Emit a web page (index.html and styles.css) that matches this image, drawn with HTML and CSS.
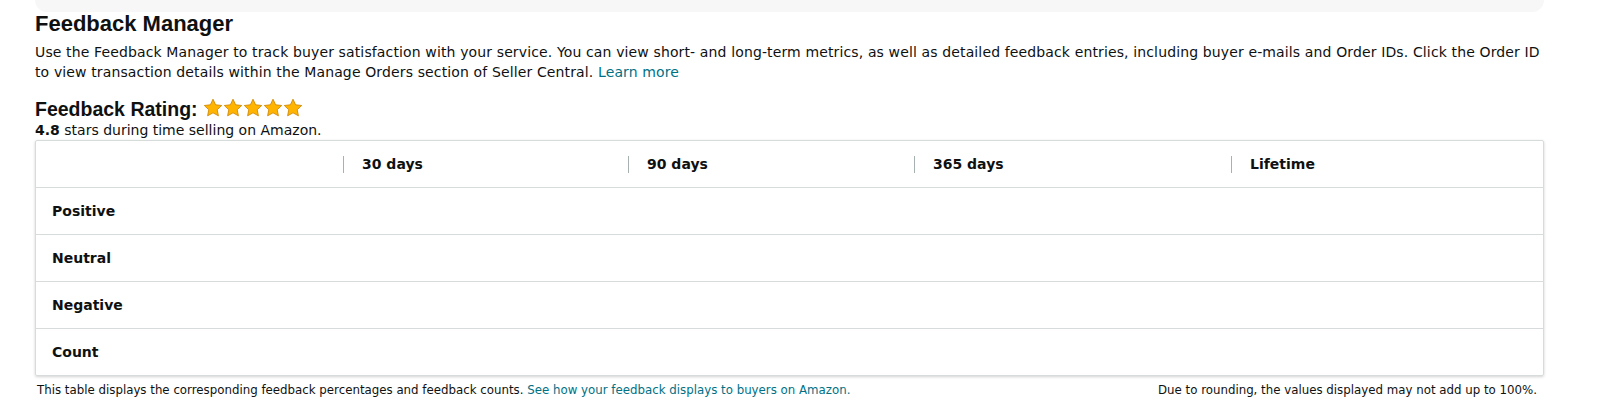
FILE: index.html
```html
<!DOCTYPE html>
<html>
<head>
    <meta charset="UTF-8">
    <link rel="stylesheet" href="styles.css">
</head>
<body>
<div class="page">
    <div class="top-bar"></div>

    <h1 class="title">Feedback Manager</h1>
    <p class="intro">Use the Feedback Manager to track buyer satisfaction with your service. You can view short- and long-term metrics, as well as detailed feedback entries, including buyer e-mails and Order IDs. Click the Order ID to view transaction details within the Manage Orders section of Seller Central. <a href="#">Learn more</a></p>

    <div class="rating">
        <h2 class="rating-title">Feedback Rating:</h2>
        <div class="stars">
            <svg viewBox="0 0 20 20"><path d="M10 1.2l2.6 5.6 6.1.7-4.5 4.2 1.2 6.1L10 14.8l-5.4 3 1.2-6.1-4.5-4.2 6.1-.7z"/></svg>
            <svg viewBox="0 0 20 20"><path d="M10 1.2l2.6 5.6 6.1.7-4.5 4.2 1.2 6.1L10 14.8l-5.4 3 1.2-6.1-4.5-4.2 6.1-.7z"/></svg>
            <svg viewBox="0 0 20 20"><path d="M10 1.2l2.6 5.6 6.1.7-4.5 4.2 1.2 6.1L10 14.8l-5.4 3 1.2-6.1-4.5-4.2 6.1-.7z"/></svg>
            <svg viewBox="0 0 20 20"><path d="M10 1.2l2.6 5.6 6.1.7-4.5 4.2 1.2 6.1L10 14.8l-5.4 3 1.2-6.1-4.5-4.2 6.1-.7z"/></svg>
            <svg viewBox="0 0 20 20"><path d="M10 1.2l2.6 5.6 6.1.7-4.5 4.2 1.2 6.1L10 14.8l-5.4 3 1.2-6.1-4.5-4.2 6.1-.7z"/></svg>
        </div>
    </div>
    <p class="rating-note"><b>4.8</b> stars during time selling on Amazon.</p>

    <div class="metrics">
        <div class="metrics-row metrics-head">
            <div class="cell"></div>
            <div class="cell"><span class="col-title">30 days</span></div>
            <div class="cell"><span class="col-title">90 days</span></div>
            <div class="cell"><span class="col-title">365 days</span></div>
            <div class="cell"><span class="col-title">Lifetime</span></div>
        </div>
        <div class="metrics-row">
            <div class="cell row-label">Positive</div>
            <div class="cell"></div><div class="cell"></div><div class="cell"></div><div class="cell"></div>
        </div>
        <div class="metrics-row">
            <div class="cell row-label">Neutral</div>
            <div class="cell"></div><div class="cell"></div><div class="cell"></div><div class="cell"></div>
        </div>
        <div class="metrics-row">
            <div class="cell row-label">Negative</div>
            <div class="cell"></div><div class="cell"></div><div class="cell"></div><div class="cell"></div>
        </div>
        <div class="metrics-row">
            <div class="cell row-label">Count</div>
            <div class="cell"></div><div class="cell"></div><div class="cell"></div><div class="cell"></div>
        </div>
    </div>

    <div class="table-notes">
        <span>This table displays the corresponding feedback percentages and feedback counts. <a href="#">See how your feedback displays to buyers on Amazon.</a></span>
        <span>Due to rounding, the values displayed may not add up to 100%.</span>
    </div>
</div>
</body>
</html>
```

FILE: styles.css
```css
* {
    margin: 0;
    padding: 0;
    box-sizing: border-box;
}

html {
    overflow: hidden;
}

body {
    background: #fff;
    color: #0f1111;
    font-family: 'DejaVu Sans', Verdana, sans-serif;
    font-size: 14px;
}

a {
    color: #007185;
    text-decoration: none;
}

.page {
    width: 1544px;
    padding-left: 35px;
}

.top-bar {
    height: 12px;
    background: #f7f7f7;
    border-radius: 0 0 14px 14px;
}

.title {
    margin-top: 1px;
    font-family: 'Liberation Sans', Arial, sans-serif;
    font-size: 22px;
    font-weight: 700;
    line-height: 22px;
}

.intro {
    margin-top: 7px;
    line-height: 20px;
    letter-spacing: 0.13px;
}

.rating {
    display: flex;
    align-items: center;
    gap: 5px;
    margin-top: 15px;
    height: 24px;
}

.rating-title {
    font-family: 'Liberation Sans', Arial, sans-serif;
    font-size: 19.5px;
    font-weight: 700;
    line-height: 24px;
}

.stars {
    display: flex;
    margin-top: -3px;
}

.stars svg {
    width: 20px;
    height: 20px;
    fill: #ffb400;
    stroke: #d18a06;
    stroke-width: 0.9;
    stroke-linejoin: round;
}

.rating-note {
    margin-top: 1px;
    line-height: 17px;
    margin-bottom: 1px;
}

.metrics {
    border: 1px solid #d8dbdb;
    box-shadow: 0 1px 3px rgba(0, 0, 0, 0.18);
    border-radius: 2px;
}

.metrics-row {
    display: grid;
    grid-template-columns: 307px 285px 286px 317px 1fr;
    height: 47px;
    border-top: 1px solid #d8dbdb;
}

.metrics-head {
    border-top: none;
    height: 46px;
}

.cell {
    display: flex;
    align-items: center;
    font-weight: 700;
}

.row-label {
    padding-left: 16px;
}

.col-title {
    display: flex;
    align-items: center;
    border-left: 1px solid #a8b0b2;
    padding-left: 18px;
    height: 17px;
}

.table-notes {
    display: flex;
    justify-content: space-between;
    padding: 7px 7px 0 2px;
    font-size: 11.8px;
    line-height: 15px;
}
```
